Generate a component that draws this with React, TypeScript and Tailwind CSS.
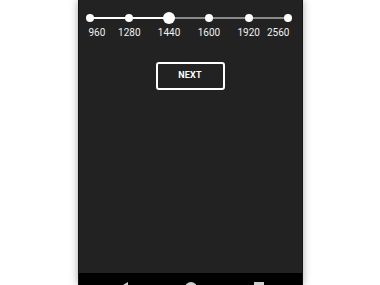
import React from "react";

const stops = ["960", "1280", "1440", "1600", "1920", "2560"];
const selected = 2;

function Slider() {
  return (
    <div className="relative ml-[11px] mr-[13px] mt-[14px]">
      {/* track */}
      <div className="absolute left-0 right-0 top-[3px] h-[2px] bg-[#8a8a8a]" />
      <div className="absolute left-0 top-[3px] h-[2px] w-[40%] bg-white" />
      <div className="relative flex justify-between">
        {stops.map((s, i) => (
          <div key={s} className="flex h-2 w-0 items-center justify-center">
            {i === selected ? (
              <div className="h-3 w-3 shrink-0 rounded-full bg-white" />
            ) : (
              <div className="h-2 w-2 shrink-0 rounded-full bg-white" />
            )}
          </div>
        ))}
      </div>
      <div className="mt-[5px] flex justify-between text-[10px] leading-[12px] text-[#f0f0f0]">
        {stops.map((s, i) => (
          <div
            key={s}
            className={
              i === 0
                ? "flex w-0 justify-start whitespace-nowrap"
                : i === stops.length - 1
                ? "flex w-0 justify-end whitespace-nowrap"
                : "flex w-0 justify-center whitespace-nowrap"
            }
          >
            <span className={i === 0 ? "-ml-px" : i === stops.length - 1 ? "-mr-px" : ""}>
              {s}
            </span>
          </div>
        ))}
      </div>
    </div>
  );
}

export default function App() {
  return (
    <div
      className="flex h-[285px] w-[380px] justify-center overflow-hidden bg-white"
      style={{ fontFamily: "Roboto, 'Liberation Sans', sans-serif" }}
    >
      <div className="flex h-[285px] w-[225px] shrink-0 flex-col overflow-hidden border-x border-[#111] bg-[#222222] shadow-[0_0_8px_rgba(0,0,0,0.35)]">
        <div className="flex h-[273px] shrink-0 flex-col">
          <Slider />
          <div className="mt-[23px] flex justify-center">
            <button className="h-[28px] w-[69px] rounded-[3px] border-2 border-white text-[9px] font-bold tracking-wide text-white">
              NEXT
            </button>
          </div>
        </div>
        <div className="h-12 shrink-0 bg-black">
          <div className="flex items-start justify-between px-[38px] pt-[9px]">
            <svg width="12" height="12" viewBox="0 0 12 12" className="text-[#cfcfcf]">
              <polygon points="11,0 11,12 1,6" fill="currentColor" />
            </svg>
            <div className="h-[12px] w-[12px] rounded-full bg-[#cfcfcf]" />
            <div className="h-[10px] w-[10px] bg-[#cfcfcf]" />
          </div>
        </div>
      </div>
    </div>
  );
}
